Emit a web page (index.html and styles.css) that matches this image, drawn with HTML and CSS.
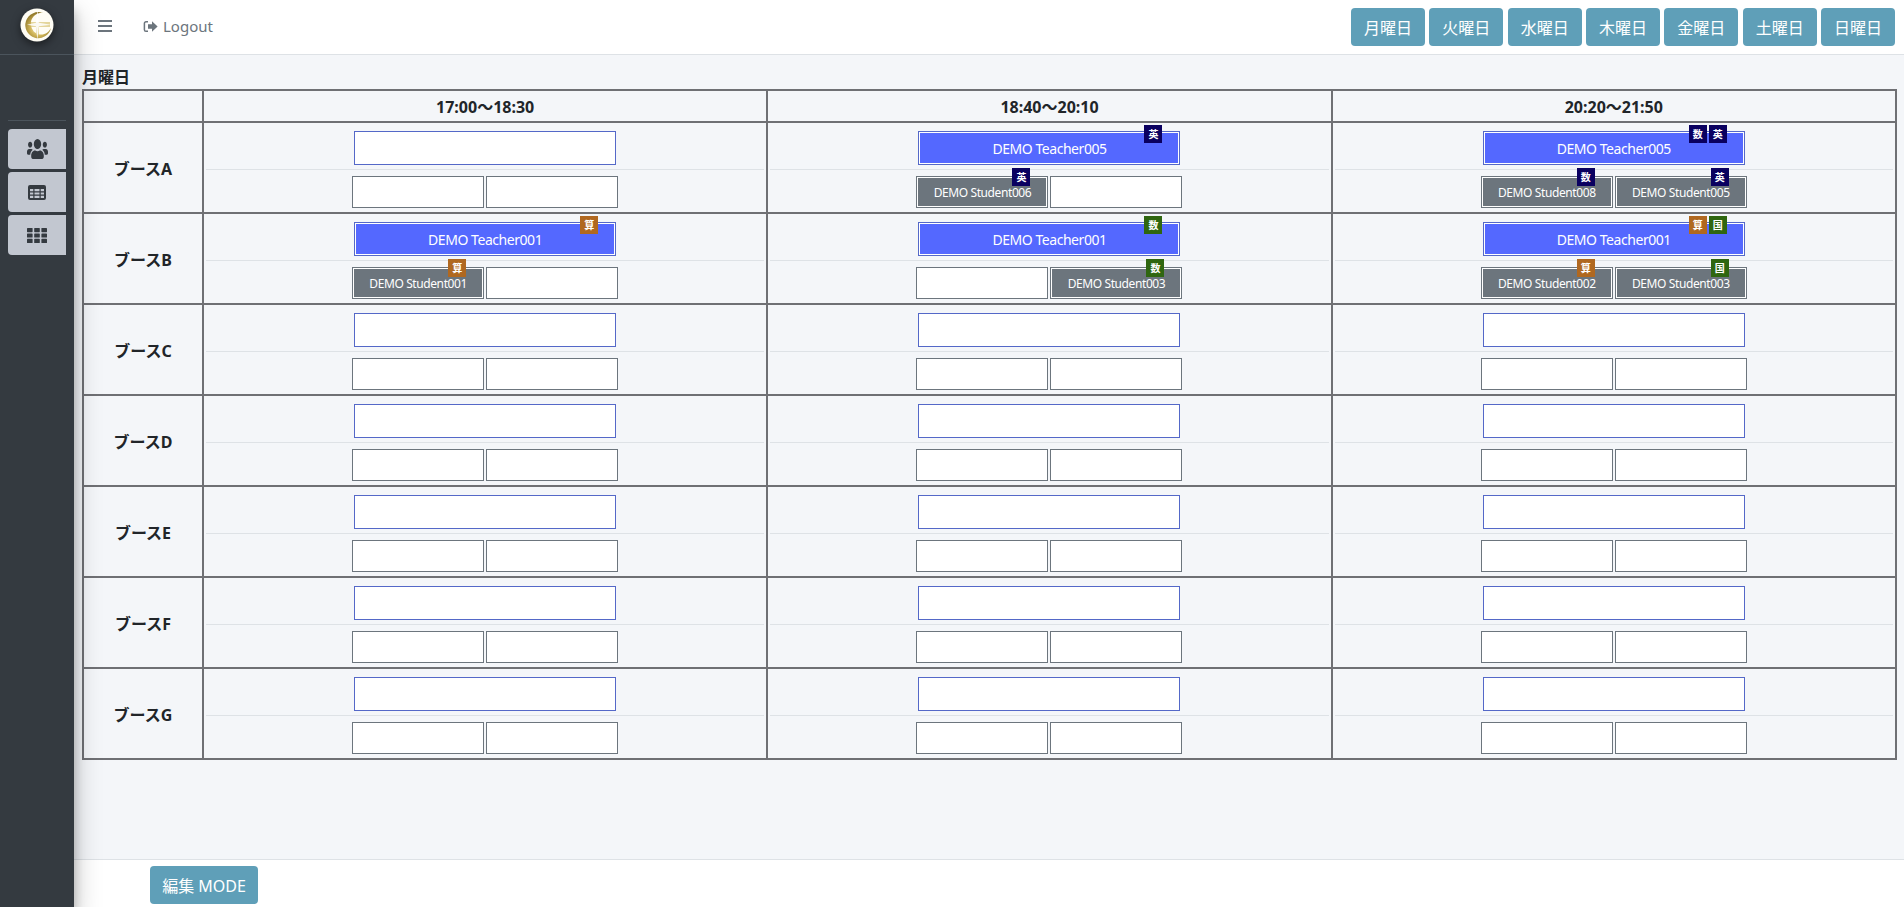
FILE: index.html
```html
<!DOCTYPE html>
<html lang="ja">
<head>
<meta charset="utf-8">
<title>月曜日</title>
<link rel="stylesheet" href="styles.css">
</head>
<body>
<aside class="sidebar">
  <div class="brand">
    <svg class="logo" viewBox="0 0 34 34" width="34" height="34">
      <defs>
        <radialGradient id="gold" cx="0.5" cy="0.6" r="0.6">
          <stop offset="0" stop-color="#f7f0c8"/>
          <stop offset="0.5" stop-color="#d2b75a"/>
          <stop offset="1" stop-color="#8c7426"/>
        </radialGradient>
      </defs>
      <circle cx="17" cy="17" r="16.5" fill="#fffdf4"/>
      <path d="M23 5A13 13 0 1 0 31 20C29 24 25 27 20 26.500A10 10 0 0 1 11 17A10.500 10.500 0 0 1 23 5Z" fill="url(#gold)"/>
      <path d="M11 14H30V19H19V27H16V19H11Z" fill="#d9c476" opacity=".7"/>
      <path d="M17.400 1.500L18.800 14.800L31 16.800L18.800 18.200L17.400 32.500L16 18.200L7 16.800L16 14.800Z" fill="#fff" opacity=".85"/>
    </svg>
  </div>
  <nav class="side-nav">
    <a class="side-btn">
      <svg class="side-icon" viewBox="0 32 640 448" width="21" height="20" preserveAspectRatio="none"><path d="M96 224c35.3 0 64-28.7 64-64s-28.7-64-64-64-64 28.7-64 64 28.7 64 64 64zm448 0c35.3 0 64-28.7 64-64s-28.7-64-64-64-64 28.7-64 64 28.7 64 64 64zm32 32h-64c-17.6 0-33.5 7.1-45.1 18.6 40.3 22.1 68.9 62 75.1 109.4h66c17.7 0 32-14.3 32-32v-32c0-35.3-28.7-64-64-64zm-256 0c61.9 0 112-50.1 112-112S381.9 32 320 32 208 82.1 208 144s50.1 112 112 112zm76.8 32h-8.3c-20.8 10-43.9 16-68.5 16s-47.6-6-68.5-16h-8.3C179.6 288 128 339.6 128 403.2V432c0 26.5 21.5 48 48 48h288c26.5 0 48-21.5 48-48v-28.8c0-63.6-51.6-115.2-115.2-115.2zm-223.7-13.4C161.5 263.1 145.6 256 128 256H64c-35.3 0-64 28.7-64 64v32c0 17.7 14.3 32 32 32h65.9c6.3-47.4 34.9-87.3 75.2-109.4z"/></svg>
    </a>
    <a class="side-btn">
      <svg class="side-icon" viewBox="0 0 18 15" width="18" height="15"><path fill-rule="evenodd" d="M2 0H16A2 2 0 0 1 18 2V13A2 2 0 0 1 16 15H2A2 2 0 0 1 0 13V2A2 2 0 0 1 2 0ZM2 4V6.200H5.300V4ZM6.500 4V6.200H11.500V4ZM12.700 4V6.200H16V4ZM2 7.400V9.600H5.300V7.400ZM6.500 7.400V9.600H11.500V7.400ZM12.700 7.400V9.600H16V7.400ZM2 10.800V13H5.300V10.800ZM6.500 10.800V13H11.500V10.800ZM12.700 10.800V13H16V10.800Z"/></svg>
    </a>
    <a class="side-btn">
      <svg class="side-icon" viewBox="0 0 20 15" width="20" height="15"><rect width="5.600" height="4.200" rx=".6"/><rect x="7.200" width="5.600" height="4.200" rx=".6"/><rect x="14.400" width="5.600" height="4.200" rx=".6"/><rect y="5.400" width="5.600" height="4.200" rx=".6"/><rect x="7.200" y="5.400" width="5.600" height="4.200" rx=".6"/><rect x="14.400" y="5.400" width="5.600" height="4.200" rx=".6"/><rect y="10.800" width="5.600" height="4.200" rx=".6"/><rect x="7.200" y="10.800" width="5.600" height="4.200" rx=".6"/><rect x="14.400" y="10.800" width="5.600" height="4.200" rx=".6"/></svg>
    </a>
  </nav>
</aside>
<div class="main">
  <header class="topbar">
    <div class="top-left">
      <svg class="bars" viewBox="0 0 14 12" width="14" height="12"><rect width="14" height="2"/><rect y="5" width="14" height="2"/><rect y="10" width="14" height="2"/></svg>
      <a class="logout">
        <svg class="logout-icon" viewBox="0 0 15 13" width="15" height="13"><path d="M5 1.700H3A1.600 1.600 0 0 0 1.400 3.300V9.700A1.600 1.600 0 0 0 3 11.300H5" fill="none" stroke="currentColor" stroke-width="1.500"/><path d="M5 4.200H9V1.200L14.600 6.500L9 11.800V8.800H5Z" fill="currentColor"/></svg>
        <span>Logout</span>
      </a>
    </div>
    <div class="days">
      <a class="btn">月曜日</a><a class="btn">火曜日</a><a class="btn">水曜日</a><a class="btn">木曜日</a><a class="btn">金曜日</a><a class="btn">土曜日</a><a class="btn">日曜日</a>
    </div>
  </header>
  <main class="content">
    <div class="day-title">月曜日</div>
    <table class="grid">
      <colgroup><col class="col-booth"><col class="col-time"><col class="col-time"><col class="col-time"></colgroup>
      <thead>
        <tr><th></th><th>17:00～18:30</th><th>18:40～20:10</th><th>20:20～21:50</th></tr>
      </thead>
      <tbody>
        <tr>
          <th>ブースA</th>
          <td><div class="teacher"></div><div class="rule"></div><div class="students"><div class="student"></div><div class="student"></div></div></td>
          <td><div class="teacher on">DEMO Teacher005<div class="badges"><span class="badge navy">英</span></div></div><div class="rule"></div><div class="students"><div class="student on">DEMO Student006<div class="badges"><span class="badge navy">英</span></div></div><div class="student"></div></div></td>
          <td><div class="teacher on">DEMO Teacher005<div class="badges"><span class="badge navy">数</span><span class="badge navy">英</span></div></div><div class="rule"></div><div class="students"><div class="student on">DEMO Student008<div class="badges"><span class="badge navy">数</span></div></div><div class="student on">DEMO Student005<div class="badges"><span class="badge navy">英</span></div></div></div></td>
        </tr>
        <tr>
          <th>ブースB</th>
          <td><div class="teacher on">DEMO Teacher001<div class="badges"><span class="badge orange">算</span></div></div><div class="rule"></div><div class="students"><div class="student on">DEMO Student001<div class="badges"><span class="badge orange">算</span></div></div><div class="student"></div></div></td>
          <td><div class="teacher on">DEMO Teacher001<div class="badges"><span class="badge green">数</span></div></div><div class="rule"></div><div class="students"><div class="student"></div><div class="student on">DEMO Student003<div class="badges"><span class="badge green">数</span></div></div></div></td>
          <td><div class="teacher on">DEMO Teacher001<div class="badges"><span class="badge orange">算</span><span class="badge green">国</span></div></div><div class="rule"></div><div class="students"><div class="student on">DEMO Student002<div class="badges"><span class="badge orange">算</span></div></div><div class="student on">DEMO Student003<div class="badges"><span class="badge green">国</span></div></div></div></td>
        </tr>
        <tr>
          <th>ブースC</th>
          <td><div class="teacher"></div><div class="rule"></div><div class="students"><div class="student"></div><div class="student"></div></div></td>
          <td><div class="teacher"></div><div class="rule"></div><div class="students"><div class="student"></div><div class="student"></div></div></td>
          <td><div class="teacher"></div><div class="rule"></div><div class="students"><div class="student"></div><div class="student"></div></div></td>
        </tr>
        <tr>
          <th>ブースD</th>
          <td><div class="teacher"></div><div class="rule"></div><div class="students"><div class="student"></div><div class="student"></div></div></td>
          <td><div class="teacher"></div><div class="rule"></div><div class="students"><div class="student"></div><div class="student"></div></div></td>
          <td><div class="teacher"></div><div class="rule"></div><div class="students"><div class="student"></div><div class="student"></div></div></td>
        </tr>
        <tr>
          <th>ブースE</th>
          <td><div class="teacher"></div><div class="rule"></div><div class="students"><div class="student"></div><div class="student"></div></div></td>
          <td><div class="teacher"></div><div class="rule"></div><div class="students"><div class="student"></div><div class="student"></div></div></td>
          <td><div class="teacher"></div><div class="rule"></div><div class="students"><div class="student"></div><div class="student"></div></div></td>
        </tr>
        <tr>
          <th>ブースF</th>
          <td><div class="teacher"></div><div class="rule"></div><div class="students"><div class="student"></div><div class="student"></div></div></td>
          <td><div class="teacher"></div><div class="rule"></div><div class="students"><div class="student"></div><div class="student"></div></div></td>
          <td><div class="teacher"></div><div class="rule"></div><div class="students"><div class="student"></div><div class="student"></div></div></td>
        </tr>
        <tr>
          <th>ブースG</th>
          <td><div class="teacher"></div><div class="rule"></div><div class="students"><div class="student"></div><div class="student"></div></div></td>
          <td><div class="teacher"></div><div class="rule"></div><div class="students"><div class="student"></div><div class="student"></div></div></td>
          <td><div class="teacher"></div><div class="rule"></div><div class="students"><div class="student"></div><div class="student"></div></div></td>
        </tr>
      </tbody>
    </table>
  </main>
  <footer class="footer"><a class="btn btn-mode">編集 MODE</a></footer>
</div>
</body>
</html>
```
FILE: styles.css
```css
* { box-sizing: border-box; }
html, body { height: 100%; }
body {
  margin: 0;
  display: flex;
  height: 907px;
  overflow: hidden;
  font-family: "Noto Sans", "Noto Sans CJK JP", sans-serif;
  font-size: 16px;
  color: #212529;
  background: #f4f6f9;
}
.sidebar {
  flex: 0 0 74px;
  position: relative;
  z-index: 5;
  background: #343a40;
  box-shadow: 0 14px 28px rgba(0,0,0,.25), 0 10px 10px rgba(0,0,0,.22);
}
.brand {
  height: 55px;
  display: flex;
  justify-content: center;
  padding-top: 8px;
  border-bottom: 1px solid #4b545c;
}
.logo { filter: drop-shadow(0 3px 4px rgba(0,0,0,.5)); }
.side-nav {
  margin: 65px 8px 0;
  padding-top: 8px;
  border-top: 1px solid #4b545c;
  display: flex;
  flex-direction: column;
  gap: 3px;
}
.side-btn {
  height: 40px;
  background: #c2c7d0;
  border-radius: 4px 0 0 4px;
  display: flex;
  align-items: center;
  justify-content: center;
}
.side-icon { fill: #343a40; }
.main {
  flex: 1;
  min-width: 0;
  display: flex;
  flex-direction: column;
}
.topbar {
  height: 55px;
  flex: none;
  background: #fff;
  border-bottom: 1px solid #dee2e6;
  display: flex;
  align-items: flex-start;
  justify-content: space-between;
  padding: 8px 9px 0 24px;
}
.top-left {
  display: flex;
  align-items: center;
  height: 36px;
  color: #6c757d;
}
.bars { fill: #6c757d; }
.logout {
  margin-left: 31px;
  display: flex;
  align-items: center;
  gap: 5px;
  font-size: 15px;
  color: #6c757d;
}
.days { display: flex; gap: 4.33px; }
.btn {
  display: flex;
  align-items: center;
  justify-content: center;
  width: 74px;
  height: 38px;
  background: #5f9fb8;
  color: #fff;
  border-radius: 4px;
  font-size: 16px;
}
.content {
  flex: 1;
  padding: 11px 8px 0;
  min-height: 0;
}
.day-title {
  font-weight: 700;
  font-size: 16px;
  line-height: 23px;
}
.grid {
  width: 1813px;
  table-layout: fixed;
  border-collapse: collapse;
  border: 2px solid #6f7074;
}
.col-booth { width: 120px; }
.col-time { width: 564.33px; }
.grid th, .grid td { border: 2px solid #6f7074; padding: 0; }
.grid thead th { height: 32px; font-size: 16px; font-weight: 700; }
.grid tbody tr { height: 91px; }
.grid tbody th { font-size: 16px; font-weight: 700; }
.grid td { vertical-align: top; padding: 8px 2px 0; }
.teacher {
  position: relative;
  width: 262px;
  height: 34px;
  margin: 0 auto;
  background: #fff;
  border: 1px solid #5468c8;
  display: flex;
  align-items: center;
  justify-content: center;
  color: #fff;
  font-size: 14px;
  letter-spacing: -.45px;
}
.teacher.on {
  background: #5468ff;
  box-shadow: inset 0 0 0 1px #fff;
}
.rule { height: 1px; background: #dee2e6; margin: 4px 0 6px; }
.students { display: flex; justify-content: center; gap: 2px; }
.student {
  position: relative;
  width: 132px;
  height: 32px;
  background: #fff;
  border: 1px solid #6c757d;
  display: flex;
  align-items: center;
  justify-content: center;
  color: #fff;
  font-size: 12px;
  letter-spacing: -.4px;
}
.student.on {
  background: #6c757d;
  box-shadow: inset 0 0 0 1px #fff;
}
.badges {
  position: absolute;
  top: -7px;
  right: 17px;
  display: flex;
  gap: 2px;
  letter-spacing: 0;
}
.student .badges { top: -9px; }
.badge {
  width: 18px;
  height: 18px;
  display: flex;
  align-items: center;
  justify-content: center;
  font-size: 10px;
  font-weight: 700;
  color: #fff;
  line-height: 1;
}
.navy { background: #0a0060; }
.orange { background: #b06820; }
.green { background: #2f6610; }
.footer {
  height: 48px;
  flex: none;
  background: #fff;
  border-top: 1px solid #dee2e6;
  padding: 6px 0 0 76px;
}
.btn-mode { width: 108px; }
```
